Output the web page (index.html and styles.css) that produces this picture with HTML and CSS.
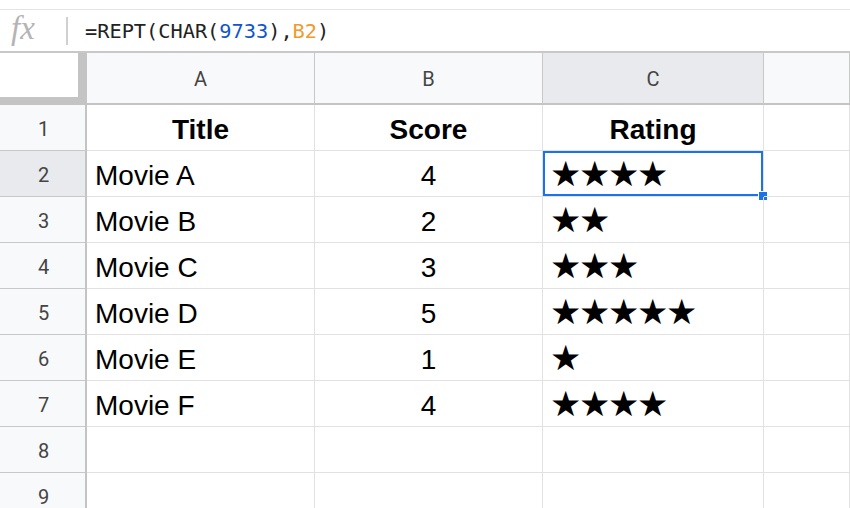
FILE: index.html
```html
<!DOCTYPE html>
<html>
<head>
<meta charset="utf-8">
<link rel="stylesheet" href="styles.css">
</head>
<body>
<div class="topstrip"></div>
<div class="fbar">
  <span class="fx">fx</span>
  <span class="sep"></span>
  <span class="formula">=REPT(CHAR(<span class="num">9733</span>),<span class="ref">B2</span>)</span>
</div>
<div class="grid">
  <div class="corner"></div>
  <div class="ch">A</div>
  <div class="ch">B</div>
  <div class="ch sel">C</div>
  <div class="ch"></div>

  <div class="rh">1</div>
  <div class="c bold center">Title</div>
  <div class="c bold center">Score</div>
  <div class="c bold center">Rating</div>
  <div class="c"></div>

  <div class="rh sel">2</div>
  <div class="c">Movie A</div>
  <div class="c center">4</div>
  <div class="c stars active">★★★★<span class="handle"></span></div>
  <div class="c"></div>

  <div class="rh">3</div>
  <div class="c">Movie B</div>
  <div class="c center">2</div>
  <div class="c stars">★★</div>
  <div class="c"></div>

  <div class="rh">4</div>
  <div class="c">Movie C</div>
  <div class="c center">3</div>
  <div class="c stars">★★★</div>
  <div class="c"></div>

  <div class="rh">5</div>
  <div class="c">Movie D</div>
  <div class="c center">5</div>
  <div class="c stars">★★★★★</div>
  <div class="c"></div>

  <div class="rh">6</div>
  <div class="c">Movie E</div>
  <div class="c center">1</div>
  <div class="c stars">★</div>
  <div class="c"></div>

  <div class="rh">7</div>
  <div class="c">Movie F</div>
  <div class="c center">4</div>
  <div class="c stars">★★★★</div>
  <div class="c"></div>

  <div class="rh">8</div>
  <div class="c"></div>
  <div class="c"></div>
  <div class="c"></div>
  <div class="c"></div>

  <div class="rh">9</div>
  <div class="c"></div>
  <div class="c"></div>
  <div class="c"></div>
  <div class="c"></div>
</div>
</body>
</html>
```

FILE: styles.css
```css
html, body {
  margin: 0;
  padding: 0;
  background: #fff;
  overflow: hidden;
}
body {
  width: 850px;
  height: 508px;
  font-family: "Liberation Sans", Arial, sans-serif;
}
.topstrip {
  height: 9px;
  border-bottom: 1px solid #e3e3e3;
}
.fbar {
  height: 43px;
  display: flex;
  align-items: center;
  border-bottom: 2px solid #c8c8c8;
  box-sizing: border-box;
}
.fx {
  font-family: "Liberation Serif", "DejaVu Serif", serif;
  font-style: italic;
  font-size: 33px;
  color: #b4b4b4;
  width: 55px;
  padding-left: 11px;
  box-sizing: border-box;
  line-height: 1;
  margin-top: -4px;
}
.sep {
  width: 2px;
  height: 28px;
  background: #d0d0d0;
  margin-left: 11px;
  margin-right: 17px;
}
.formula {
  font-family: "DejaVu Sans Mono", "Liberation Mono", monospace;
  font-size: 20.3px;
  color: #222;
}
.formula .num { color: #1155cc; }
.formula .ref { color: #f09a2e; }

.grid {
  display: grid;
  grid-template-columns: 87px 228px 228px 221px 86px;
  grid-template-rows: 52px repeat(9, 46px);
}
.corner {
  background: #fff;
  border-right: 9px solid #c4c4c4;
  border-bottom: 8px solid #c4c4c4;
}
.ch {
  background: #f8f9fa;
  border-right: 1px solid #c8c8c8;
  border-bottom: 2px solid #c4c4c4;
  display: flex;
  align-items: center;
  justify-content: center;
  font-family: "Roboto", "Liberation Sans", sans-serif;
  font-size: 20px;
  color: #444;
  padding-top: 2px;
}
.ch.sel { background: #e8eaed; }
.rh {
  background: #f8f9fa;
  border-right: 2px solid #c4c4c4;
  border-bottom: 1px solid #c8c8c8;
  display: flex;
  align-items: center;
  justify-content: center;
  font-family: "Roboto", "Liberation Sans", sans-serif;
  font-size: 20px;
  color: #444;
  padding-left: 2px;
  padding-top: 2px;
}
.rh.sel { background: #e8eaed; }
.c {
  border-right: 1px solid #e2e2e2;
  border-bottom: 1px solid #e2e2e2;
  display: flex;
  align-items: center;
  padding-left: 8px;
  padding-top: 4px;
  font-size: 28px;
  line-height: 1;
  color: #000;
  white-space: nowrap;
  position: relative;
}
.c.center { justify-content: center; padding-left: 0; }
.c.bold { font-weight: bold; }
.c.stars {
  font-family: "DejaVu Sans", sans-serif;
  font-size: 35px;
  letter-spacing: -2.4px;
  padding-left: 7px;
  padding-top: 2px;
}
.c.active {
  box-shadow: inset 0 0 0 2px #1a73e8;
}
.handle {
  position: absolute;
  right: -5px;
  bottom: -5px;
  width: 8px;
  height: 8px;
  background: #1a73e8;
  border: 1px solid #fff;
}
```
